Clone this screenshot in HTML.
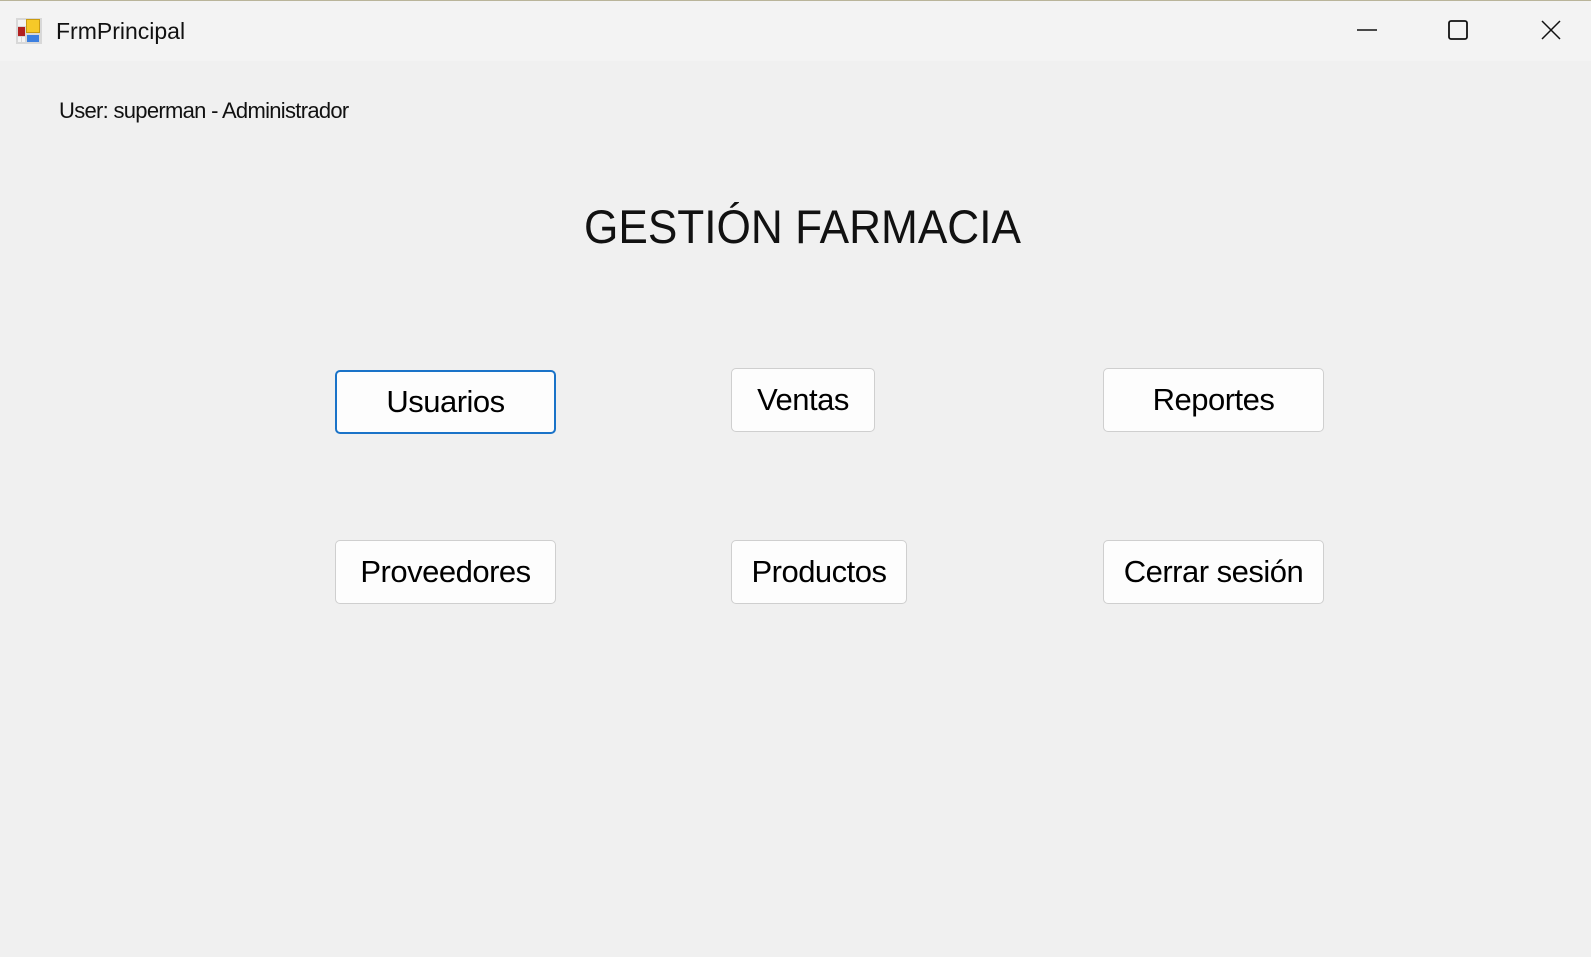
<!DOCTYPE html>
<html><head><meta charset="utf-8"><style>
*{margin:0;padding:0;box-sizing:border-box}
body{width:1591px;height:957px;background:#f0f0f0;font-family:"Liberation Sans",Arial,sans-serif;position:relative;overflow:hidden;color:#000}
.tb{position:absolute;left:0;top:0;width:1591px;height:61px;background:#f3f3f3;border-top:1px solid #b9b49a}
.tt{position:absolute;left:56px;top:17px;font-size:23px;color:#111}
.btn{position:absolute;background:#fdfdfd;border:1px solid #cfcfcf;border-radius:5px;font-size:31px;display:flex;align-items:center;justify-content:center;height:64px;letter-spacing:-0.5px}
.sel{border:2px solid #1a73c8}
</style></head><body>
<div class="tb">
<svg style="position:absolute;left:15px;top:16px" width="28" height="28" viewBox="0 0 28 28">
<rect x="1" y="1" width="26" height="26" fill="#d8d8d8"/>
<rect x="3" y="3" width="8" height="6" fill="#f4f4f4"/>
<rect x="11" y="2" width="14" height="14" fill="#c99a10"/><rect x="12" y="3" width="12" height="12" fill="#f6c928"/>
<rect x="3" y="10" width="7" height="9" fill="#b22020"/>
<rect x="12" y="18" width="12" height="7" fill="#3c7fe0"/>
<rect x="3" y="20" width="3" height="5" fill="#f4f4f4"/><rect x="7" y="20" width="3" height="5" fill="#f4f4f4"/>
</svg>
<div class="tt">FrmPrincipal</div>
<svg style="position:absolute;left:1350px;top:14px" width="230" height="30">
<line x1="7" y1="15" x2="27" y2="15" stroke="#111" stroke-width="1.5"/>
<rect x="99" y="6" width="18" height="18" rx="2" fill="none" stroke="#111" stroke-width="1.8"/>
<path d="M192 6 L210 24 M210 6 L192 24" stroke="#111" stroke-width="1.5"/>
</svg>
</div>
<div style="position:absolute;left:59px;top:98px;font-size:22px;letter-spacing:-0.7px;color:#111">User: superman - Administrador</div>
<div style="position:absolute;left:584px;top:199px;font-size:47px;color:#111;transform:scaleX(0.94);transform-origin:left top;white-space:nowrap">GESTIÓN FARMACIA</div>
<div class="btn sel" style="left:335px;top:370px;width:221px">Usuarios</div>
<div class="btn" style="left:731px;top:368px;width:144px">Ventas</div>
<div class="btn" style="left:1103px;top:368px;width:221px">Reportes</div>
<div class="btn" style="left:335px;top:540px;width:221px">Proveedores</div>
<div class="btn" style="left:731px;top:540px;width:176px">Productos</div>
<div class="btn" style="left:1103px;top:540px;width:221px">Cerrar sesión</div>
</body></html>
